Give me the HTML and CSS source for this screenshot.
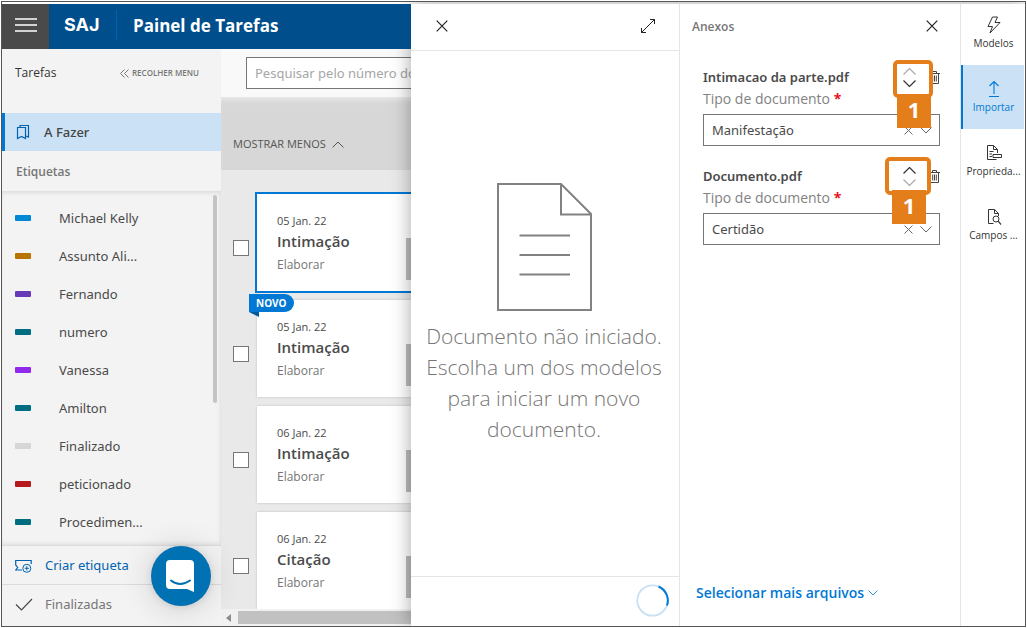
FILE: index.html
```html
<!DOCTYPE html>
<html lang="pt-BR">
<head>
<meta charset="utf-8">
<title>Painel de Tarefas</title>
<link rel="stylesheet" href="styles.css">
</head>
<body>
<div class="frame">
  <div class="app">
    <header class="topbar">
      <button class="menu-btn" aria-label="Menu"><svg width="22" height="14" viewBox="0 0 22 14"><path d="M0 1h22M0 7h22M0 13h22" stroke="#fff" stroke-width="1.4"/></svg></button>
      <span class="logo">SAJ</span>
      <h1 class="title">Painel de Tarefas</h1>
    </header>
    <div class="workspace">
      <nav class="sidebar">
        <div class="side-head">
          <span>Tarefas</span>
          <button class="collapse"><svg width="9" height="9" viewBox="0 0 9 9"><path d="M4.5.5l-4 4 4 4M8.500.5l-4 4 4 4" fill="none" stroke="#767676"/></svg>RECOLHER MENU</button>
        </div>
        <a class="side-active" href="#"><svg width="14" height="16" viewBox="0 0 14 16"><path d="M1.500 3.500h8v11l-4-2-4 2zM4 3V1.500h8.500v11.500l-2.500-1" fill="none" stroke="#0063b1" stroke-width="1.2"/></svg>A Fazer</a>
        <h2 class="side-label">Etiquetas</h2>
        <div class="tags-wrap">
          <ul class="tags">
            <li><i class="blue"></i>Michael Kelly</li>
            <li><i class="ochre"></i>Assunto Ali...</li>
            <li><i class="purple"></i>Fernando</li>
            <li><i class="teal"></i>numero</li>
            <li><i class="violet"></i>Vanessa</li>
            <li><i class="teal"></i>Amilton</li>
            <li><i class="silver"></i>Finalizado</li>
            <li><i class="red"></i>peticionado</li>
            <li><i class="teal"></i>Procedimen...</li>
          </ul>
          <div class="vthumb"></div>
        </div>
        <button class="side-action create"><svg width="18" height="15" viewBox="0 0 18 15"><path d="M7 12H.7l2-2.500L.7 7V2.500h15.500V6" fill="none" stroke="#0063b1" stroke-width="1.2"/><circle cx="11.800" cy="10.300" r="4" fill="#f3f3f3" stroke="#0063b1"/><path d="M11.800 8.200v4.200M9.700 10.300h4.200" stroke="#0063b1"/></svg>Criar etiqueta</button>
        <button class="side-action done"><svg width="18" height="13" viewBox="0 0 18 13"><path d="M1 6.500l5.500 5.500L17 1" fill="none" stroke="#444" stroke-width="1.100"/></svg>Finalizadas</button>
      </nav>
      <main class="main">
        <div class="search"><input type="text" aria-label="Pesquisar" placeholder="Pesquisar pelo número do processo"></div>
        <div class="band"><button class="less">MOSTRAR MENOS<svg width="12" height="7" viewBox="0 0 12 7"><path d="M.5 6.500L6 1l5.500 5.500" fill="none" stroke="#555"/></svg></button></div>
        <div class="tasks">
          <div class="task">
            <input type="checkbox" aria-label="Selecionar tarefa 1">
            <article class="card selected"><div class="card-text"><time>05 Jan. 22</time><h3>Intimação</h3><p>Elaborar</p></div><span class="handle"></span></article>
          </div>
          <div class="task">
            <input type="checkbox" aria-label="Selecionar tarefa 2">
            <article class="card"><span class="novo">NOVO</span><div class="card-text"><time>05 Jan. 22</time><h3>Intimação</h3><p>Elaborar</p></div><span class="handle"></span></article>
          </div>
          <div class="task">
            <input type="checkbox" aria-label="Selecionar tarefa 3">
            <article class="card"><div class="card-text"><time>06 Jan. 22</time><h3>Intimação</h3><p>Elaborar</p></div><span class="handle"></span></article>
          </div>
          <div class="task">
            <input type="checkbox" aria-label="Selecionar tarefa 4">
            <article class="card"><div class="card-text"><time>06 Jan. 22</time><h3>Citação</h3><p>Elaborar</p></div><span class="handle"></span></article>
          </div>
        </div>
        <div class="hscroll"><svg width="5" height="8" viewBox="0 0 5 8"><path d="M5 0v8L0 4z" fill="#8c8c8c"/></svg><span></span></div>
      </main>
    </div>
    <button class="chat" aria-label="Conversar"><svg width="30" height="34" viewBox="0 0 30 34"><path d="M4 1h20a4 4 0 0 1 4 4v28l-7-3H4a4 4 0 0 1-4-4V5a4 4 0 0 1 4-4z" fill="#fff"/><path d="M5 21.500q9 7 19 0" fill="none" stroke="#0071b3" stroke-width="2" stroke-linecap="round"/></svg></button>
  </div>

  <div class="drawer">
    <section class="editor">
      <header class="editor-head">
        <button aria-label="Fechar"><svg width="12" height="12" viewBox="0 0 12 12"><path d="M.7.7l10.600 10.600M11.300.7L.7 11.300" stroke="#222" stroke-width="1.200"/></svg></button>
        <button aria-label="Expandir"><svg width="16" height="16" viewBox="0 0 16 16"><path d="M1.500 14.500l13-13M10 1.500h4.500V6M1.500 10v4.500H6" fill="none" stroke="#222"/></svg></button>
      </header>
      <div class="editor-body">
        <svg width="95" height="128" viewBox="0 0 95 128"><path d="M1 1h63l30 30v96H1zM64 1v30.500h30M22.500 52.500H73M22.500 72H73M22.500 91.500H73" fill="none" stroke="#828282" stroke-width="2"/></svg>
        <p>Documento não iniciado. Escolha um dos modelos para iniciar um novo documento.</p>
      </div>
      <footer class="editor-foot"><svg width="33" height="33" viewBox="0 0 33 33"><circle cx="16.500" cy="16.500" r="15.200" fill="none" stroke="#c7e0f4" stroke-width="1.800"/><path d="M22.500 2.500A15.200 15.200 0 0 1 31 21.500" fill="none" stroke="#0078d4" stroke-width="2"/></svg></footer>
    </section>

    <section class="attach">
      <header class="attach-head"><h2>Anexos</h2><button aria-label="Fechar anexos"><svg width="12" height="12" viewBox="0 0 12 12"><path d="M.7.7l10.600 10.600M11.300.7L.7 11.300" stroke="#222" stroke-width="1.200"/></svg></button></header>
      <div class="files">
        <div class="file">
          <div class="file-head">
            <h3>Intimacao da parte.pdf</h3>
            <div class="order">
              <button class="off" aria-label="Mover para cima"><svg width="13" height="7" viewBox="0 0 13 7"><path d="M.5 6.500l6-6 6 6"/></svg></button>
              <button aria-label="Mover para baixo"><svg width="13" height="7" viewBox="0 0 13 7"><path d="M.5.5l6 6 6-6"/></svg></button>
            </div>
            <button class="trash" aria-label="Excluir"><svg width="11" height="13" viewBox="0 0 11 13"><path d="M0 2.500h11M3.500 2.500v-2h4v2M1.500 2.500v10h8v-10M3.700 4.500v6M5.500 4.500v6M7.300 4.500v6" fill="none" stroke="#444"/></svg></button>
          </div>
          <label for="tipo1">Tipo de documento <b>*</b></label>
          <div class="field">
            <select id="tipo1"><option>Manifestação</option></select>
            <span class="field-icons"><svg width="9" height="9" viewBox="0 0 9 9"><path d="M.5.5l8 8M8.500.5l-8 8"/></svg><svg width="12" height="7" viewBox="0 0 12 7"><path d="M.5.5L6 6 11.500.5"/></svg></span>
          </div>
          <div class="mark first"><span>1</span></div>
        </div>
        <div class="file">
          <div class="file-head">
            <h3>Documento.pdf</h3>
            <div class="order">
              <button aria-label="Mover para cima"><svg width="13" height="7" viewBox="0 0 13 7"><path d="M.5 6.500l6-6 6 6"/></svg></button>
              <button class="off" aria-label="Mover para baixo"><svg width="13" height="7" viewBox="0 0 13 7"><path d="M.5.5l6 6 6-6"/></svg></button>
            </div>
            <button class="trash" aria-label="Excluir"><svg width="11" height="13" viewBox="0 0 11 13"><path d="M0 2.500h11M3.500 2.500v-2h4v2M1.500 2.500v10h8v-10M3.700 4.500v6M5.500 4.500v6M7.300 4.500v6" fill="none" stroke="#444"/></svg></button>
          </div>
          <label for="tipo2">Tipo de documento <b>*</b></label>
          <div class="field">
            <select id="tipo2"><option>Certidão</option></select>
            <span class="field-icons"><svg width="9" height="9" viewBox="0 0 9 9"><path d="M.5.5l8 8M8.500.5l-8 8"/></svg><svg width="12" height="7" viewBox="0 0 12 7"><path d="M.5.5L6 6 11.500.5"/></svg></span>
          </div>
          <div class="mark second"><span>1</span></div>
        </div>
      </div>
      <button class="more">Selecionar mais arquivos<svg width="10" height="6" viewBox="0 0 10 6"><path d="M.5.5L5 5 9.500.5" fill="none" stroke="#0078d4" stroke-width=".8"/></svg></button>
    </section>

    <nav class="rail">
      <button><svg width="16" height="18" viewBox="0 0 16 18"><path d="M6.500 1h5L9 6.500h5L4 17l2.500-6.500H2z" fill="none" stroke="#333" stroke-linejoin="round"/></svg>Modelos</button>
      <button class="on"><svg width="16" height="18" viewBox="0 0 16 18"><path d="M8 14V1.500M3.500 6L8 1.500 12.500 6M3 16.500h10" fill="none" stroke="#0078d4" stroke-width="1.100"/></svg>Importar</button>
      <button><svg width="16" height="18" viewBox="0 0 16 18"><path d="M11.500 9V5.500l-4-4h-6v14h9M7.500 1.500v4h4M3.500 7.500h4M3.500 10h2.500M3.500 12.500h2.500" fill="none" stroke="#333"/><path d="M7 10.500h8.500v3H7z" fill="#fff" stroke="#333"/></svg>Proprieda...</button>
      <button><svg width="16" height="18" viewBox="0 0 16 18"><path d="M12.500 8V5.500l-4-4h-6v14h5M8.500 1.500v4h4" fill="none" stroke="#333"/><circle cx="10" cy="11" r="3" fill="#fff" stroke="#333"/><path d="M12.200 13.200L15 16.500" stroke="#333" stroke-width="1.200"/></svg>Campos ...</button>
    </nav>
  </div>
</div>
</body>
</html>
```
FILE: styles.css
```css
* { box-sizing: border-box; }
body {
  margin: 0;
  padding: 1px;
  height: 100vh;
  background: #fff;
  color: #4a4a4a;
  font: 13px/18px "Noto Sans", "Open Sans", sans-serif;
}
h1, h2, h3, p, ul { margin: 0; padding: 0; font: inherit; }
ul { list-style: none; }
button { margin: 0; padding: 0; border: 0; background: none; color: inherit; font: inherit; display: flex; align-items: center; justify-content: center; }
svg { display: block; flex: none; }

.frame { height: 100%; display: flex; border: 1px solid #555; padding-top: 2px; overflow: hidden; }
.app { flex: 1; min-width: 0; display: flex; flex-direction: column; position: relative; }

.topbar { display: flex; align-items: center; height: 45px; flex: none; background: #004e8c; color: #fff; position: relative; z-index: 2; overflow: hidden; white-space: nowrap; }
.menu-btn { width: 47px; height: 45px; background: #4a4a4a; padding-bottom: 3px; }
.logo { width: 68px; padding-left: 15px; height: 30px; line-height: 30px; margin-bottom: 3px; border-right: 1px solid #0063b1; font-family: Inter, sans-serif; font-size: 18px; font-weight: 700; }
.title { padding: 0 0 2px 16px; font-family: "Open Sans", sans-serif; font-size: 17px; font-weight: 700; line-height: 24px; }

.workspace { flex: 1; min-height: 0; display: flex; }
.sidebar { width: 219px; flex: none; background: #f3f3f3; display: flex; flex-direction: column; }
.side-head { height: 64px; flex: none; padding: 15px 22px 0 13px; display: flex; align-items: flex-start; justify-content: space-between; color: #333; font-family: "Open Sans", sans-serif; font-size: 12px; }
.collapse { gap: 3px; color: #767676; font-size: 8px; font-weight: 600; }
.side-active { height: 38px; flex: none; display: flex; align-items: center; gap: 14px; padding-left: 11px; border-left: 3px solid #0078d4; background: #cbe2f6; color: #444; font-weight: 500; text-decoration: none; }
.side-label { height: 40px; flex: none; line-height: 41px; padding-left: 14px; color: #767676; font-family: "Open Sans", sans-serif; font-size: 12px; font-weight: 600; }
.tags-wrap { flex: 1; min-height: 0; display: flex; overflow: hidden; justify-content: space-between; border-top: 1px solid #e0e0e0; box-shadow: inset 0 3px 4px -2px #ddd, inset 0 -3px 4px -2px #ddd, inset -3px 0 4px -2px #e3e3e3; padding: 3px 4px 0 13px; }
.tags { padding-top: 4px; }
.tags li { height: 38px; display: flex; align-items: center; gap: 28px; }
.tags i { width: 16px; height: 6px; border-radius: 1px; }
.blue { background: #0088d4; }
.ochre { background: #b97400; }
.purple { background: #673ab7; }
.teal { background: #006e80; }
.violet { background: #9029ec; }
.silver { background: #d6d6d6; }
.red { background: #b5191c; }
.vthumb { width: 4px; height: 208px; border-radius: 2px; background: #c4c4c4; }
.side-action { flex: none; height: 39px; justify-content: flex-start; gap: 12px; padding-left: 13px; border-top: 1px solid #dcdcdc; }
.create { color: #0063b1; }
.done { height: 42px; padding-bottom: 3px; color: #767676; }

.main { flex: 1; min-width: 0; display: flex; flex-direction: column; background: #e9e9e9; }
.search { flex: none; height: 48px; padding: 8px 0 0 25px; background: #f9f9f9; }
.search input { display: block; width: 100%; height: 32px; border: 1px solid #767676; border-right: 0; padding: 0 0 0 8px; font: inherit; background: #fff; }
.search input::placeholder { color: #a6a6a6; }
.band { flex: none; height: 73px; padding: 37px 0 0 12px; background: #d7d7d7; box-shadow: inset 0 6px 5px -3px #e8e8e8; }
.less { gap: 6px; font-family: "Open Sans", sans-serif; font-size: 11px; line-height: 20px; color: #555; white-space: nowrap; }
.tasks { flex: 1; min-height: 0; padding: 24px 0 0 12px; overflow: hidden; display: flex; flex-direction: column; gap: 9px; font-family: "Open Sans", sans-serif; }
.task { display: flex; gap: 8px; flex: none; }
.task input { appearance: none; flex: none; width: 16px; height: 16px; margin: 46px 0 0; border: 1px solid #767676; background: #fff; }
.card { flex: 1; min-width: 0; height: 97px; display: flex; justify-content: space-between; position: relative; padding: 18px 0 0 20px; background: #fff; box-shadow: 0 0 2px #bbb; }
.selected { box-shadow: 0 0 0 2px #0078d4; }
.card time { display: block; font-size: 11px; }
.card h3 { font-size: 15px; font-weight: 600; line-height: 22px; }
.card p { font-size: 12px; line-height: 26px; color: #767676; }
.handle { width: 5px; height: 42px; margin-top: 26px; background: #bbb; }
.novo { position: absolute; left: -8px; top: -6px; width: 45px; height: 18px; line-height: 18px; padding-left: 7px; background: #0078d4; color: #fff; font-size: 10px; font-weight: 700; border-radius: 0 9px 9px 0; }
.novo::after { content: ""; position: absolute; left: 0; top: 18px; border-top: 5px solid #005a9e; border-left: 10px solid transparent; }
.hscroll { flex: none; height: 17px; display: flex; align-items: center; gap: 7px; padding-left: 5px; background: #f1f1f1; }
.hscroll span { flex: 1; height: 13px; background: #c1c1c1; }
.chat { position: absolute; left: 149px; bottom: 20px; width: 60px; height: 60px; border-radius: 50%; background: #0071b3; box-shadow: 0 1px 6px rgba(0,0,0,.1), 0 2px 32px rgba(0,0,0,.16); }

.drawer { flex: none; display: flex; position: relative; z-index: 1; background: #fff; box-shadow: 0 0 18px rgba(0,0,0,.35); }
.editor { width: 269px; display: flex; flex-direction: column; border-right: 1px solid #e5e5e5; }
.editor-head { height: 47px; display: flex; align-items: center; justify-content: space-between; padding: 0 23px 2px 25px; border-bottom: 1px solid #e5e5e5; }
.editor-body { flex: 1; display: flex; flex-direction: column; align-items: center; justify-content: center; gap: 10px; padding: 0 14px 0 12px; text-align: center; color: #767676; font-family: "Open Sans", sans-serif; font-size: 21px; font-weight: 300; line-height: 31px; }
.editor-foot { height: 50px; display: flex; align-items: center; justify-content: flex-end; padding: 0 10px 3px; border-top: 1px solid #e5e5e5; }

.attach { width: 280px; display: flex; flex-direction: column; }
.attach-head { height: 62px; display: flex; align-items: flex-start; justify-content: space-between; padding: 14px 22px 0 12px; color: #767676; font-family: "Open Sans", sans-serif; font-size: 12px; font-weight: 600; }
.attach-head button { padding-top: 2px; }
.files { flex: 1; display: flex; flex-direction: column; gap: 19px; padding: 0 20px 0 23px; }
.file { position: relative; height: 80px; }
.file-head { height: 22px; display: flex; align-items: center; }
.file-head h3 { flex: 1; font-weight: 600; }
.order { display: flex; flex-direction: column; gap: 5px; padding-right: 13px; }
.order path { fill: none; stroke: #333; stroke-width: 1.2; }
.order .off path { stroke: #aaa; }
.file label { display: block; height: 26px; line-height: 22px; font-family: "Open Sans", sans-serif; font-size: 14px; color: #828282; }
.file b { color: #e81123; font-weight: 700; }
.field { position: relative; }
.field select { appearance: none; display: block; width: 100%; height: 32px; padding: 0 40px 0 8px; border: 1px solid #767676; border-radius: 0; background: #fff; color: #4a4a4a; font: inherit; }
.field-icons { position: absolute; right: 8px; top: 12px; display: flex; align-items: center; gap: 7px; }
.field-icons path { fill: none; stroke: #666; }
.mark { position: absolute; height: 38px; border: 4px solid #e37e1b; border-radius: 5px; }
.mark span { position: absolute; top: 30px; width: 34px; height: 34px; line-height: 30px; background: #e37e1b; color: #fff; text-align: center; font-size: 22px; font-weight: 700; }
.first { right: 7px; top: -6px; width: 40px; }
.first span { left: 0; }
.second { right: 9px; top: -8px; width: 46px; }
.second span { left: 3px; top: 29px; }
.more { align-self: flex-start; gap: 4px; margin: 0 0 24px 16px; color: #0078d4; font-family: "Open Sans", sans-serif; font-size: 14px; font-weight: 600; }

.rail { width: 65px; padding-right: 1px; border-left: 1px solid #e5e5e5; font-family: "Open Sans", sans-serif; font-size: 10px; line-height: 14px; color: #333; }
.rail button { width: 100%; height: 64px; flex-direction: column; justify-content: flex-end; gap: 2px; padding: 0 0 15px 2px; white-space: nowrap; }
.rail button:first-child { height: 61px; }
.rail .on { background: #cbe2f6; color: #0078d4; box-shadow: inset 2px 0 #0078d4; }
```
